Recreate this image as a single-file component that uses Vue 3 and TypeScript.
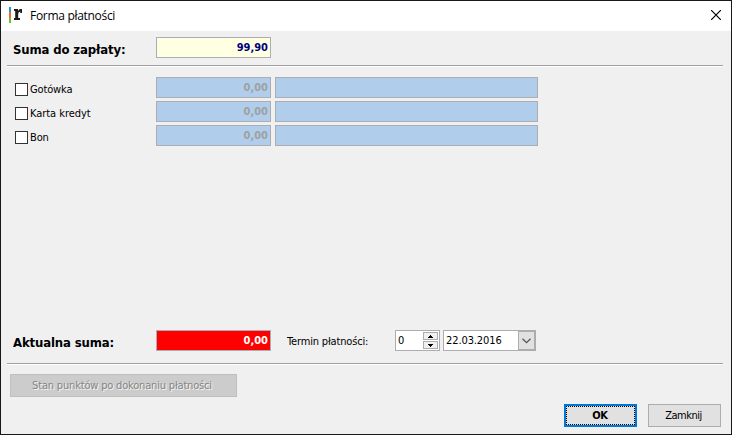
<script setup lang="ts">
import { reactive, ref } from 'vue'

interface Payment {
  name: string
  amount: string
  note: string
  checked: boolean
  style: string
}

const payments = reactive<Payment[]>([
  { name: 'Gotówka', amount: '0,00', note: '', checked: false, style: 'cash' },
  { name: 'Karta kredyt', amount: '0,00', note: '', checked: false, style: 'card' },
  { name: 'Bon', amount: '0,00', note: '', checked: false, style: 'voucher' },
])
const total = '99,90'
const current = '0,00'
const days = ref(0)
const dueDate = '22.03.2016'
</script>

<template>
  <div class="window">
    <header class="titlebar">
      <svg class="logo" width="14" height="16" viewBox="0 0 14 16">
        <rect x="0" y="0" width="2" height="5" fill="#2196cf" />
        <rect x="0" y="5" width="2" height="6" fill="#f0642d" />
        <rect x="0" y="11" width="2" height="5" fill="#6cc12b" />
        <path d="M5 2H9V4Q9.8 2 11.5 2H13V6H11.3V4.5Q9.2 4.8 9.2 7V11H11V13H5V11H6.2V4H5Z" fill="#1b1b1b" />
      </svg>
      <span class="title">Forma płatności</span>
      <svg class="close" width="10" height="10" viewBox="0 0 10 10">
        <path d="M0 0L10 10M10 0L0 10" stroke="#000" stroke-width="1.2" />
      </svg>
    </header>

    <section class="sum">
      <span class="heading">Suma do zapłaty:</span>
      <div class="field amount total">{{ total }}</div>
    </section>
    <div class="rule"></div>

    <section class="payments">
      <div v-for="p in payments" :key="p.name" class="payment">
        <label class="option" @click="p.checked = !p.checked">
          <span class="box"></span>
          <span :class="p.style">{{ p.name }}</span>
        </label>
        <div class="field amount disabled">{{ p.amount }}</div>
        <div class="field note disabled">{{ p.note }}</div>
      </div>
    </section>

    <section class="current">
      <span class="heading">Aktualna suma:</span>
      <div class="field amount missing">{{ current }}</div>
      <span class="term">Termin płatności:</span>
      <div class="field spin">
        <span>{{ days }}</span>
        <div class="arrows">
          <button class="arrow" @click="days++">
            <svg width="5" height="3" viewBox="0 0 5 3"><path d="M2 0H3V1H4V2H5V3H0V2H1V1H2Z" /></svg>
          </button>
          <button class="arrow" @click="days--">
            <svg width="5" height="3" viewBox="0 0 5 3"><path d="M0 0H5V1H4V2H3V3H2V2H1V1H0Z" /></svg>
          </button>
        </div>
      </div>
      <div class="field date">
        <span class="digits">{{ dueDate }}</span>
        <div class="drop">
          <svg width="9" height="6" viewBox="0 0 9 6"><path d="M.5 .7L4.5 4.7L8.5 .7" fill="none" stroke="#555" stroke-width="1.3" /></svg>
        </div>
      </div>
    </section>
    <div class="rule"></div>

    <button class="btn points" disabled><span>Stan punktów po dokonaniu płatności</span></button>
    <footer class="actions">
      <button class="btn ok"><span class="focus">OK</span></button>
      <button class="btn cancel"><span>Zamknij</span></button>
    </footer>
  </div>
</template>

<style>
body {
  margin: 0;
}
</style>

<style scoped>
.window {
  box-sizing: border-box;
  width: 732px;
  height: 435px;
  border: 1px solid #18181b;
  background: #f0f0f0;
  color: #000;
  font: 11px/13px "DejaVu Sans Condensed", "DejaVu Sans", sans-serif;
  display: flex;
  flex-direction: column;
  overflow: hidden;
  white-space: nowrap;
}
.titlebar {
  box-sizing: border-box;
  height: 30px;
  flex: none;
  background: #fff;
  display: flex;
  align-items: center;
  padding: 0 10px 2px 8px;
}
.logo {
  margin-right: 7px;
}
.title {
  font: 12px/16px "Open Sans", sans-serif;
  letter-spacing: -0.3px;
  flex: 1;
  padding-top: 2px;
}
.sum {
  display: flex;
  padding: 6px 0 7px 12px;
  height: 21px;
}
.heading {
  width: 143px;
  font-weight: bold;
  font-size: 13px;
  line-height: 25px;
  letter-spacing: -0.13px;
}
.field {
  box-sizing: border-box;
  height: 21px;
  border: 1px solid #abadb3;
  background: #fff;
}
.amount {
  width: 115px;
  padding-right: 2px;
  text-align: right;
  font-weight: bold;
  line-height: 19px;
}
.total {
  background: #ffffe1;
  color: #000080;
}
.disabled {
  background: #b0ceec;
  color: #a0a0a0;
}
.missing {
  background: #f00;
  color: #fff;
}
.rule {
  height: 1px;
  flex: none;
  margin: 0 8px 0 6px;
  background: #a0a0a0;
  border-bottom: 1px solid #fff;
}
.payments {
  display: flex;
  flex-direction: column;
  gap: 3px;
  padding: 10px 0 0 14px;
}
.payment {
  display: flex;
}
.option {
  width: 141px;
  display: flex;
  align-items: center;
  gap: 2px;
  padding-top: 4px;
  height: 21px;
  box-sizing: border-box;
}
.cash,
.voucher {
  letter-spacing: -0.15px;
}
.card {
  letter-spacing: -0.05px;
}
.box {
  box-sizing: border-box;
  width: 13px;
  height: 13px;
  border: 1px solid #333;
  background: #fff;
}
.note {
  width: 263px;
  margin-left: 4px;
}
.current {
  margin-top: auto;
  display: flex;
  height: 21px;
  padding: 0 0 12px 12px;
}
.term {
  width: 108px;
  margin-left: 16px;
  line-height: 23px;
  letter-spacing: -0.16px;
}
.spin {
  width: 45px;
  display: flex;
  justify-content: space-between;
  padding: 0 1px 0 2px;
  line-height: 19px;
}
.arrows {
  display: flex;
  flex-direction: column;
  gap: 1px;
  padding-top: 1px;
}
.arrow {
  box-sizing: border-box;
  width: 15px;
  height: 8px;
  padding: 0;
  border: 1px solid #acacac;
  background: #f0f0f0;
  display: flex;
  align-items: center;
  justify-content: center;
}
.date {
  width: 93px;
  margin-left: 3px;
  padding-left: 2px;
  display: flex;
  justify-content: space-between;
  line-height: 19px;
}
.digits {
  letter-spacing: -0.1px;
}
.drop {
  box-sizing: border-box;
  width: 17px;
  height: 19px;
  border: 1px solid #acacac;
  background: #e1e1e1;
  display: flex;
  align-items: center;
  justify-content: center;
}
.btn {
  box-sizing: border-box;
  height: 23px;
  width: 73px;
  padding: 0;
  border: 1px solid #adadad;
  background: #e1e1e1;
  color: #000;
  font: inherit;
}
.points {
  width: 227px;
  flex: none;
  margin: 9px 0 0 9px;
  padding-right: 3px;
  background: #ccc;
  border-color: #bfbfbf;
  color: #858585;
  text-shadow: 1px 1px 0 #f4f4f4;
  letter-spacing: -0.18px;
}
.actions {
  display: flex;
  justify-content: flex-end;
  gap: 11px;
  padding: 7px 10px 7px 0;
}
.ok {
  border: 2px solid #0078d7;
  font-weight: bold;
  letter-spacing: -0.3px;
}
.cancel {
  letter-spacing: -0.5px;
  padding-right: 2px;
}
.focus {
  display: block;
  box-sizing: border-box;
  height: 19px;
  padding-right: 1px;
  border: 1px dotted #000;
  line-height: 17px;
}
</style>
